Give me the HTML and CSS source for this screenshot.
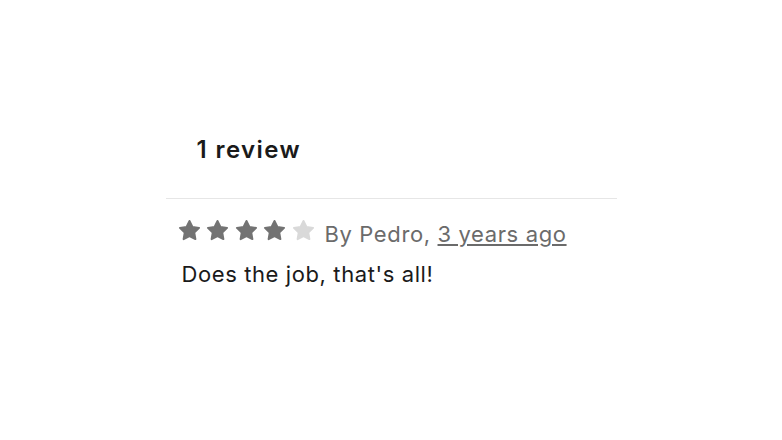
FILE: index.html
```html
<!DOCTYPE html>
<html lang="en">
<head>
<meta charset="utf-8">
<title>Reviews</title>
<link rel="stylesheet" href="styles.css">
</head>
<body>
<main class="reviews">
  <h2 class="reviews-title">1 review</h2>
  <article class="review">
    <div class="review-meta">
      <span class="stars" aria-label="4 out of 5 stars">
        <svg class="star star-on" viewBox="0 0 24 24"><polygon points="12,2 15.09,8.26 22,9.27 17,14.14 18.18,21.02 12,17.77 5.82,21.02 7,14.14 2,9.27 8.91,8.26"/></svg>
        <svg class="star star-on" viewBox="0 0 24 24"><polygon points="12,2 15.09,8.26 22,9.27 17,14.14 18.18,21.02 12,17.77 5.82,21.02 7,14.14 2,9.27 8.91,8.26"/></svg>
        <svg class="star star-on" viewBox="0 0 24 24"><polygon points="12,2 15.09,8.26 22,9.27 17,14.14 18.18,21.02 12,17.77 5.82,21.02 7,14.14 2,9.27 8.91,8.26"/></svg>
        <svg class="star star-on" viewBox="0 0 24 24"><polygon points="12,2 15.09,8.26 22,9.27 17,14.14 18.18,21.02 12,17.77 5.82,21.02 7,14.14 2,9.27 8.91,8.26"/></svg>
        <svg class="star star-off" viewBox="0 0 24 24"><polygon points="12,2 15.09,8.26 22,9.27 17,14.14 18.18,21.02 12,17.77 5.82,21.02 7,14.14 2,9.27 8.91,8.26"/></svg>
      </span>
      <span class="byline">By Pedro, <a class="review-date" href="#">3 years ago</a></span>
    </div>
    <p class="review-body">Does the job, that's all!</p>
  </article>
</main>
</body>
</html>
```
FILE: styles.css
```css
html, body {
  margin: 0;
  padding: 0;
  background: #ffffff;
}

body {
  font-family: Inter, "Noto Sans", sans-serif;
  color: #1a1a1a;
}

.reviews {
  width: 451px;
  margin: 0 auto;
  padding-top: 135px;
}

.reviews-title {
  margin: 0;
  padding: 0 30px 34px 31px;
  font-size: 24px;
  line-height: 29px;
  font-weight: 600;
  letter-spacing: 1.4px;
  color: #1a1a1a;
  border-bottom: 1px solid #e6e6e6;
}

.review {
  padding: 20px 16px 0;
}

.review-meta {
  display: flex;
  align-items: flex-start;
  gap: 10px;
}

.stars {
  display: flex;
  gap: 5.5px;
  margin-left: -4px;
}

.star {
  width: 23px;
  height: 23px;
  display: block;
}

.star polygon {
  stroke-width: 2;
  stroke-linejoin: round;
}

.star-on polygon {
  fill: #737373;
  stroke: #737373;
}

.star-off polygon {
  fill: #d9d9d9;
  stroke: #d9d9d9;
}

.byline {
  margin-top: 1px;
  font-size: 22px;
  line-height: 28px;
  letter-spacing: 0.62px;
  color: #6b6b6b;
}

.review-date {
  color: #6b6b6b;
  text-decoration: underline;
  text-underline-offset: 2px;
  text-decoration-thickness: 1.5px;
}

.review-body {
  margin: 12px 0 0;
  font-size: 22px;
  line-height: 28px;
  letter-spacing: 0.6px;
  color: #1a1a1a;
}
```
